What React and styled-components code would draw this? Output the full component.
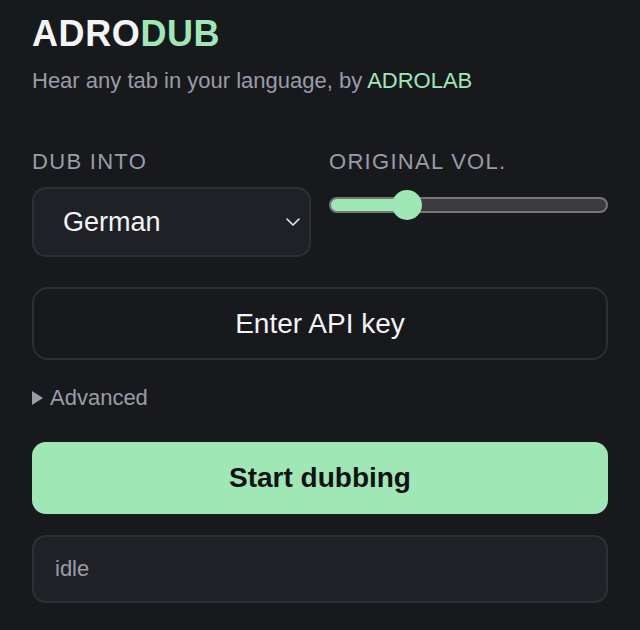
import React, { useState } from 'react';
import styled, { createGlobalStyle } from 'styled-components';

const GlobalStyle = createGlobalStyle`
  html, body {
    margin: 0;
    background: #18191d;
  }
  body {
    font-family: 'Liberation Sans', Arial, Helvetica, sans-serif;
    color: #f3f4f6;
  }
`;

const Panel = styled.main`
  width: 640px;
  box-sizing: border-box;
  padding: 13px 32px 24px 32px;
`;

const Title = styled.h1`
  margin: 0;
  font-size: 36px;
  line-height: 42px;
  font-weight: 700;
  letter-spacing: 0.6px;
  color: #f3f4f6;

  span {
    color: #9fe8b6;
  }
`;

const Tagline = styled.p`
  margin: 13px 0 0;
  font-size: 22px;
  line-height: 26px;
  color: #9a9ca8;

  span {
    color: #9fe8b6;
  }
`;

const Controls = styled.div`
  display: grid;
  grid-template-columns: 1fr 1fr;
  column-gap: 18px;
  margin-top: 56px;
`;

const Field = styled.div`
  display: flex;
  flex-direction: column;
`;

const Label = styled.label`
  font-size: 22px;
  line-height: 24px;
  letter-spacing: 1.3px;
  text-transform: uppercase;
  color: #9a9ca8;
  margin-bottom: ${p => p.$gap || 13}px;
`;

const SelectWrap = styled.div`
  position: relative;

  svg {
    position: absolute;
    right: 8px;
    top: 50%;
    transform: translateY(-50%);
    pointer-events: none;
  }
`;

const Select = styled.select`
  appearance: none;
  width: 100%;
  height: 70px;
  box-sizing: border-box;
  padding: 0 40px 0 29px;
  border-radius: 14px;
  border: 2px solid #2e2f36;
  background: #202126;
  color: #f3f4f6;
  font-family: inherit;
  font-size: 27px;
  outline: none;
`;

const Range = styled.input`
  appearance: none;
  -webkit-appearance: none;
  width: 100%;
  height: 16px;
  margin: 0;
  border-radius: 8px;
  border: 2px solid #767676;
  box-sizing: border-box;
  outline: none;

  &::-webkit-slider-thumb {
    -webkit-appearance: none;
    width: 30px;
    height: 30px;
    border-radius: 50%;
    background: #9fe8b6;
    border: none;
  }
`;

const OutlineButton = styled.button`
  margin-top: 30px;
  width: 100%;
  height: 73px;
  border-radius: 16px;
  border: 2px solid #2e2f36;
  background: transparent;
  color: #f3f4f6;
  font-family: inherit;
  font-size: 28px;
  cursor: pointer;
`;

const Advanced = styled.details`
  margin-top: 25px;
  font-size: 22px;
  line-height: 26px;
  color: #9a9ca8;

  summary {
    cursor: pointer;
    list-style: none;
    display: flex;
    align-items: center;
    gap: 7px;
  }

  summary::-webkit-details-marker {
    display: none;
  }
`;

const Caret = styled.span`
  width: 0;
  height: 0;
  border-top: 7px solid transparent;
  border-bottom: 7px solid transparent;
  border-left: 11px solid #9a9ca8;
`;

const PrimaryButton = styled.button`
  margin-top: 31px;
  width: 100%;
  height: 72px;
  border-radius: 14px;
  border: none;
  background: #9fe8b6;
  color: #111214;
  font-family: inherit;
  font-size: 28px;
  font-weight: 700;
  cursor: pointer;
`;

const Status = styled.div`
  margin-top: 21px;
  height: 68px;
  box-sizing: border-box;
  display: flex;
  align-items: center;
  padding: 0 21px;
  border-radius: 14px;
  border: 2px solid #2e2f36;
  background: #202126;
  color: #9a9ca8;
  font-size: 22px;
`;

const Chevron = () => (
  <svg width="20" height="20" viewBox="0 0 20 20" fill="none" stroke="#e5e7eb" strokeWidth="1.6" strokeLinecap="round" strokeLinejoin="round">
    <path d="M4 7l6 6 6-6" />
  </svg>
);

export default function App() {
  const [vol, setVol] = useState(25);
  const fill = `linear-gradient(to right, #9fe8b6 0%, #9fe8b6 ${vol}%, #3b3b3d ${vol}%, #3b3b3d 100%)`;

  return (
    <>
      <GlobalStyle />
      <Panel>
        <Title>
          ADRO<span>DUB</span>
        </Title>
        <Tagline>
          Hear any tab in your language, by <span>ADROLAB</span>
        </Tagline>

        <Controls>
          <Field>
            <Label htmlFor="lang">Dub into</Label>
            <SelectWrap>
              <Select id="lang" defaultValue="de">
                <option value="en">English</option>
                <option value="de">German</option>
                <option value="fr">French</option>
                <option value="es">Spanish</option>
              </Select>
              <Chevron />
            </SelectWrap>
          </Field>
          <Field>
            <Label htmlFor="vol" $gap={23}>Original vol.</Label>
            <Range
              id="vol"
              type="range"
              min="0"
              max="100"
              value={vol}
              onChange={e => setVol(Number(e.target.value))}
              style={{ background: fill }}
            />
          </Field>
        </Controls>

        <OutlineButton>Enter API key</OutlineButton>

        <Advanced>
          <summary>
            <Caret />
            Advanced
          </summary>
        </Advanced>

        <PrimaryButton>Start dubbing</PrimaryButton>

        <Status>idle</Status>
      </Panel>
    </>
  );
}
